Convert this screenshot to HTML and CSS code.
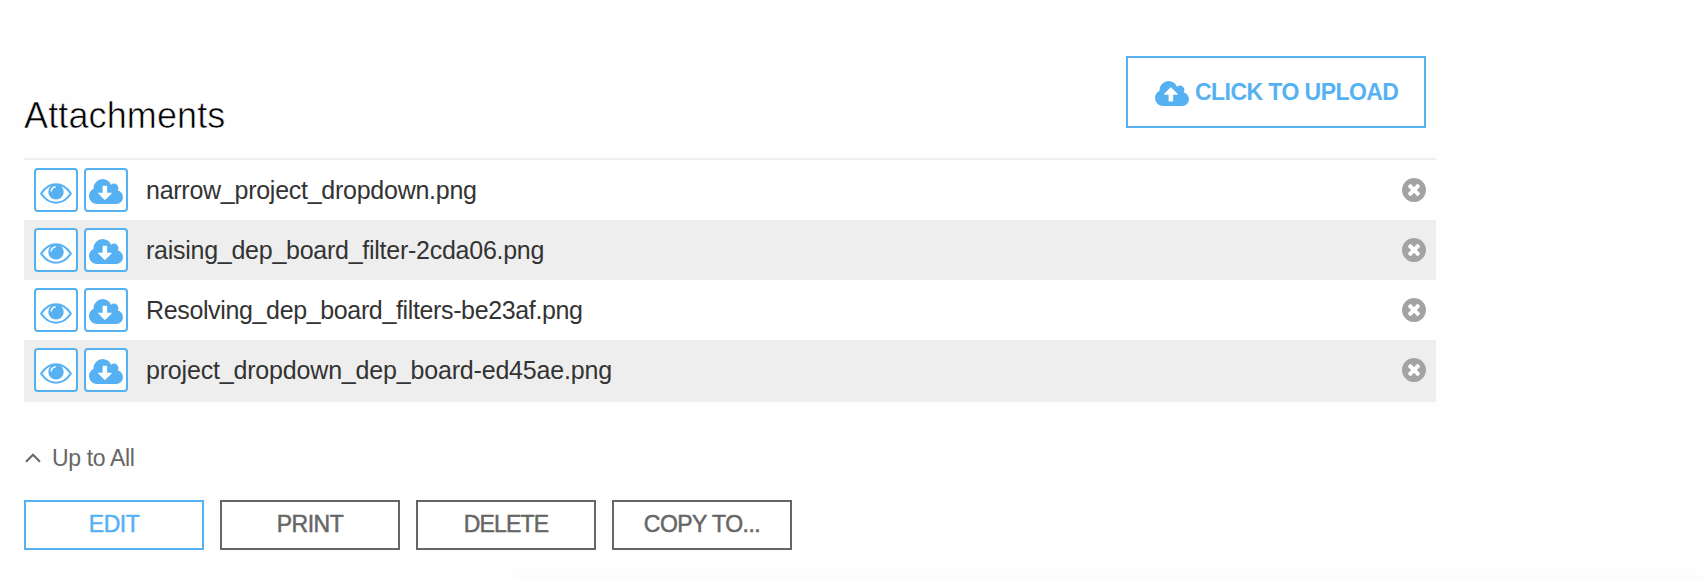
FILE: index.html
```html
<!DOCTYPE html>
<html lang="en">
<head>
<meta charset="utf-8">
<title>Attachments</title>
<link rel="stylesheet" href="styles.css">
</head>
<body>
<svg class="sprite" aria-hidden="true">
  <symbol id="eye" viewBox="0 0 32 21">
    <path d="M1.200 10.500C4.500 5.500 9.500 1.300 16 1.300S27.500 5.500 30.800 10.500C27.500 15.700 22.500 19.700 16 19.700S4.500 15.700 1.200 10.500z" fill="none" stroke="currentColor" stroke-width="2.100"/>
    <circle cx="16" cy="8.900" r="7.700" fill="currentColor"/>
    <path d="M11.300 7.900C11.500 5.600 13 4.200 15.200 3.900" fill="none" stroke="#fff" stroke-width="1.500" stroke-linecap="round"/>
  </symbol>
  <symbol id="download" viewBox="0 128 1920 1408">
    <path fill="currentColor" d="M1280 928q0-14-9-23t-23-9h-224v-352q0-13-9.500-22.500t-22.500-9.500h-192q-13 0-22.500 9.500t-9.500 22.500v352h-224q-13 0-22.500 9.500t-9.500 22.500q0 14 9 23l352 352q9 9 23 9t23-9l351-351q10-12 10-24zm640 224q0 159-112.500 271.500t-271.500 112.500h-1088q-185 0-316.500-131.500t-131.500-316.500q0-130 70-240t188-165q-2-30-2-43 0-212 150-362t362-150q156 0 285.500 87t188.500 231q71-62 166-62 106 0 181 75t75 181q0 76-41 138 130 31 213.500 135.500t83.500 238.500z"/>
  </symbol>
  <symbol id="upload" viewBox="0 128 1920 1408">
    <path fill="currentColor" d="M1280 864q0-14-9-23l-352-352q-9-9-23-9t-23 9l-351 351q-10 12-10 24 0 14 9 23t23 9h224v352q0 13 9.500 22.500t22.500 9.500h192q13 0 22.500-9.500t9.500-22.500v-352h224q13 0 22.500-9.500t9.500-22.500zm640 288q0 159-112.500 271.500t-271.500 112.500h-1088q-185 0-316.500-131.500t-131.500-316.500q0-130 70-240t188-165q-2-30-2-43 0-212 150-362t362-150q156 0 285.500 87t188.500 231q71-62 166-62 106 0 181 75t75 181q0 76-41 138 130 31 213.500 135.500t83.500 238.500z"/>
  </symbol>
  <symbol id="remove" viewBox="128 128 1536 1536">
    <circle cx="896" cy="896" r="700" fill="#fff"/>
    <path fill="currentColor" d="M1277 1122q0-26-19-45l-181-181 181-181q19-19 19-45 0-27-19-46l-90-90q-19-19-46-19-26 0-45 19l-181 181-181-181q-19-19-45-19-27 0-46 19l-90 90q-19 19-19 46 0 26 19 45l181 181-181 181q-19 19-19 45 0 27 19 46l90 90q19 19 46 19 26 0 45-19l181-181 181 181q19 19 45 19 27 0 46-19l90-90q19-19 19-46zm387-226q0 209-103 385.500t-279.500 279.500-385.500 103-385.500-103-279.500-279.500-103-385.500 103-385.500 279.500-279.500 385.500-103 385.500 103 279.500 279.500 103 385.500z"/>
  </symbol>
</svg>
<main class="panel">
  <header class="panel-head">
    <h2 class="title">Attachments</h2>
    <button class="upload"><svg class="cloud"><use href="#upload"/></svg><span>CLICK TO UPLOAD</span></button>
  </header>
  <ul class="files">
    <li class="file"><button class="tool"><svg class="eye"><use href="#eye"/></svg></button><button class="tool"><svg class="cloud"><use href="#download"/></svg></button><span class="name">narrow_project_dropdown.png</span><svg class="remove"><use href="#remove"/></svg></li>
    <li class="file"><button class="tool"><svg class="eye"><use href="#eye"/></svg></button><button class="tool"><svg class="cloud"><use href="#download"/></svg></button><span class="name">raising_dep_board_filter-2cda06.png</span><svg class="remove"><use href="#remove"/></svg></li>
    <li class="file"><button class="tool"><svg class="eye"><use href="#eye"/></svg></button><button class="tool"><svg class="cloud"><use href="#download"/></svg></button><span class="name tight">Resolving_dep_board_filters-be23af.png</span><svg class="remove"><use href="#remove"/></svg></li>
    <li class="file"><button class="tool"><svg class="eye"><use href="#eye"/></svg></button><button class="tool"><svg class="cloud"><use href="#download"/></svg></button><span class="name loose">project_dropdown_dep_board-ed45ae.png</span><svg class="remove"><use href="#remove"/></svg></li>
  </ul>
  <a class="up"><svg class="chevron" viewBox="0 0 16 10"><path d="M1 8.700 8 1.700l7 7" fill="none" stroke="currentColor" stroke-width="2"/></svg><span>Up to All</span></a>
  <div class="actions">
    <button class="action primary">EDIT</button>
    <button class="action">PRINT</button>
    <button class="action delete">DELETE</button>
    <button class="action">COPY TO...</button>
  </div>
</main>
<div class="next-panel"></div>
</body>
</html>
```
FILE: styles.css
```css
* { box-sizing: border-box; }
body {
  margin: 0;
  height: 580px;
  background: #fefefe;
  font-family: "Liberation Sans", Arial, sans-serif;
  color: #333;
  overflow: hidden;
}
.sprite { display: none; }
svg { display: block; flex: none; }
button { font: inherit; margin: 0; padding: 0; }
.panel { width: 1412px; margin-left: 24px; padding-top: 56px; }
.panel-head {
  display: flex;
  justify-content: space-between;
  height: 104px;
  padding-right: 10px;
  border-bottom: 2px solid #eee;
}
.title {
  margin: 39px 0 0;
  font-size: 36px;
  line-height: 42px;
  font-weight: 400;
  color: #000;
  letter-spacing: 0.12px;
  -webkit-text-stroke: 0.6px #fefefe;
}
.upload {
  display: flex;
  align-items: center;
  width: 300px;
  height: 72px;
  padding-left: 27px;
  gap: 6px;
  border: 2px solid #56b1f3;
  background: #fff;
  color: #56b1f3;
  font-size: 23px;
  letter-spacing: -0.55px;
  font-weight: 700;
  white-space: nowrap;
}
.upload .cloud { margin-top: 2px; }
.cloud { width: 34px; height: 25px; }
.files { list-style: none; margin: 0; padding: 0; }
.file {
  display: flex;
  align-items: flex-start;
  gap: 6px;
  height: 60px;
  padding: 8px 10px 0;
  background: #fff;
}
.file:nth-child(even) { background: #eee; }
.file:last-child { height: 62px; }
.tool {
  display: flex;
  justify-content: center;
  width: 44px;
  height: 44px;
  padding-top: 9px;
  border: 2px solid #56b1f3;
  border-radius: 4px;
  background: #fff;
  color: #56b1f3;
}
.eye { width: 32px; height: 21px; margin-top: 4px; }
.name {
  flex: 1;
  margin: 8px 0 0 12px;
  font-size: 25px;
  line-height: 28px;
  letter-spacing: -0.26px;
  white-space: nowrap;
}
.tight { letter-spacing: -0.36px; }
.loose { letter-spacing: -0.18px; }
.remove { width: 24px; height: 24px; margin-top: 10px; color: #a3a3a3; }
.up {
  display: flex;
  align-items: center;
  gap: 11px;
  margin-top: 42px;
  height: 28px;
  font-size: 23px;
  letter-spacing: -0.35px;
  color: #666;
}
.chevron { width: 16px; height: 10px; margin-left: 1px; }
.actions { display: flex; gap: 16px; margin-top: 28px; }
.action {
  width: 180px;
  height: 50px;
  padding-bottom: 1px;
  border: 2px solid #666;
  background: #fff;
  color: #666;
  font-size: 23px;
  letter-spacing: -0.5px;
  -webkit-text-stroke: 0.5px currentColor;
}
.delete { letter-spacing: -0.8px; }
.primary { border-color: #56b1f3; color: #56b1f3; }
.next-panel {
  height: 5px;
  margin: 25px 0 0 515px;
  border-top-left-radius: 5px;
  background: #fcfcfc;
}
```
